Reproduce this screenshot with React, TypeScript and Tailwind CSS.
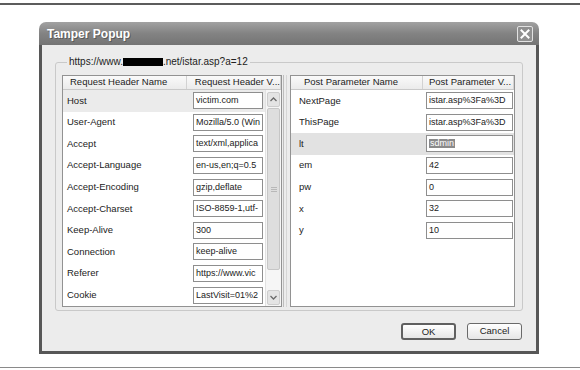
import React from "react";

const headerRows: [string, string][] = [
  ["Host", "victim.com"],
  ["User-Agent", "Mozilla/5.0 (Win"],
  ["Accept", "text/xml,applica"],
  ["Accept-Language", "en-us,en;q=0.5"],
  ["Accept-Encoding", "gzip,deflate"],
  ["Accept-Charset", "ISO-8859-1,utf-"],
  ["Keep-Alive", "300"],
  ["Connection", "keep-alive"],
  ["Referer", "https://www.vic"],
  ["Cookie", "LastVisit=01%2"],
];

const postRows: [string, string][] = [
  ["NextPage", "istar.asp%3Fa%3D"],
  ["ThisPage", "istar.asp%3Fa%3D"],
  ["lt", "sdmin"],
  ["em", "42"],
  ["pw", "0"],
  ["x", "32"],
  ["y", "10"],
];

const Field = ({ value, selected, w }: { value: string; selected?: boolean; w: string }) => (
  <div
    className={`${w} h-[17px] bg-white border border-[#8e8e8e] pl-[2px] flex items-center overflow-hidden whitespace-nowrap text-[9px] leading-none`}
  >
    {selected ? <span className="bg-[#8a8a8a] text-white px-px">{value}</span> : value}
  </div>
);

const ScrollBar = () => (
  <div className="w-[16px] flex flex-col bg-[#f6f6f6] border-l border-[#e2e2e2]">
    <div className="mt-[2px] mx-px h-[15px] rounded-[2px] bg-[#e4e4e4] border border-[#cdcdcd] flex items-center justify-center">
      <svg width="7" height="5" viewBox="0 0 7 5">
        <path d="M0.5 4 L3.5 1 L6.5 4" fill="none" stroke="#6a6a6a" strokeWidth="1.3" />
      </svg>
    </div>
    <div className="mt-px mx-px h-[162px] rounded-[2px] bg-[#dedede] border border-[#c6c6c6] flex flex-col items-center justify-center gap-px">
      <div className="w-[6px] h-px bg-[#b8b8b8]" />
      <div className="w-[6px] h-px bg-[#b8b8b8]" />
      <div className="w-[6px] h-px bg-[#b8b8b8]" />
    </div>
    <div className="flex-1" />
    <div className="mb-px mx-px h-[15px] rounded-[2px] bg-[#e4e4e4] border border-[#cdcdcd] flex items-center justify-center">
      <svg width="7" height="5" viewBox="0 0 7 5">
        <path d="M0.5 1 L3.5 4 L6.5 1" fill="none" stroke="#6a6a6a" strokeWidth="1.3" />
      </svg>
    </div>
  </div>
);

const HeaderCell = ({ label, w, pl }: { label: string; w: string; pl: string }) => (
  <div className={`${w} ${pl} h-full flex items-center border-r border-[#d2d2d2] whitespace-nowrap`}>{label}</div>
);

export default function App() {
  return (
    <div className="w-[580px] h-[370px] bg-white flex flex-col font-['Liberation_Sans',Arial,sans-serif] text-[#222]">
      <div className="mt-[3px] h-[2px] bg-[#5c5c5c]" />

      <div className="ml-[39px] mt-[17px] w-[500px] h-[332px] flex flex-col rounded-t-[7px] overflow-hidden">
        {/* title bar */}
        <div className="h-[23px] flex items-center justify-between pl-[8px] pr-[6px] bg-gradient-to-b from-[#a2a2a2] via-[#838383] to-[#747474]">
          <span className="text-white font-bold text-[12px] [text-shadow:1px_1px_0_#5a5a5a]">Tamper Popup</span>
          <div className="w-[16px] h-[16px] mt-px rounded-[2px] border border-[#e2e2e2] bg-[#909090] flex items-center justify-center">
            <svg width="10" height="10" viewBox="0 0 10 10">
              <path d="M1.5 1.5 L8.5 8.5 M8.5 1.5 L1.5 8.5" stroke="white" strokeWidth="2" strokeLinecap="square" />
            </svg>
          </div>
        </div>

        {/* body */}
        <div className="flex-1 flex flex-col bg-[#ececec] border-x-[3px] border-b-[3px] border-[#575757]">
          <fieldset className="mx-[13px] mt-[11px] border border-[#c9c9c9] rounded-[3px] pl-[6px] pr-[7px] pt-[7px] pb-[3px]">
            <legend className="ml-[5px] px-[2px] text-[10px] leading-[12px] flex items-center">
              https://www.
              <span className="inline-block w-[40px] h-[8px] bg-black" />
              .net/istar.asp?a=12
            </legend>

            <div className="flex text-[9.5px]">
              {/* request headers */}
              <div className="w-[220px] h-[232px] border border-[#929292] bg-white flex flex-col">
                <div className="h-[14px] flex bg-gradient-to-b from-[#fafafa] to-[#ebebeb] border-b border-[#c9c9c9]">
                  <HeaderCell label="Request Header Name" w="w-[125px]" pl="pl-[7px]" />
                  <HeaderCell label="Request Header V..." w="flex-1" pl="pl-[8px]" />
                </div>
                <div className="flex-1 flex">
                  <div className="flex-1 flex flex-col">
                    {headerRows.map(([k, v], i) => (
                      <div key={k} className={`h-[21.6px] flex items-center ${i === 0 ? "bg-[#ebebeb]" : ""}`}>
                        <div className="w-[125px] pl-[4px]">{k}</div>
                        <Field value={v} w="w-[70px] ml-[5px]" />
                      </div>
                    ))}
                  </div>
                  <ScrollBar />
                </div>
              </div>

              {/* splitter */}
              <div className="w-[8px] flex">
                <div className="ml-px w-px bg-[#bdbdbd]" />
                <div className="ml-[2px] w-px bg-[#d6d6d6]" />
              </div>

              {/* post params */}
              <div className="w-[225px] h-[232px] border border-[#929292] bg-white flex flex-col">
                <div className="h-[14px] flex bg-gradient-to-b from-[#fafafa] to-[#ebebeb] border-b border-[#c9c9c9]">
                  <HeaderCell label="Post Parameter Name" w="w-[132px]" pl="pl-[13px]" />
                  <HeaderCell label="Post Parameter V..." w="flex-1" pl="pl-[6px]" />
                </div>
                <div className="flex flex-col">
                  {postRows.map(([k, v]) => (
                    <div key={k} className={`h-[21.6px] flex items-center ${k === "lt" ? "bg-[#e2e2e2]" : ""}`}>
                      <div className="w-[132px] pl-[8px]">{k}</div>
                      <Field value={v} selected={k === "lt"} w="w-[87px] ml-[3px]" />
                    </div>
                  ))}
                </div>
              </div>
            </div>
          </fieldset>

          <div className="mt-[12px] pr-[14px] flex justify-end gap-[11px] text-[9.5px]">
            <button className="w-[55px] h-[17px] rounded-[3px] border-2 border-[#606060] bg-gradient-to-b from-white to-[#e6e6e6]">
              OK
            </button>
            <button className="w-[55px] h-[17px] rounded-[3px] border border-[#6a6a6a] bg-gradient-to-b from-white to-[#e6e6e6]">
              Cancel
            </button>
          </div>
        </div>
      </div>

      <div className="mt-[13px] h-px bg-[#8a8a8a]" />
    </div>
  );
}
